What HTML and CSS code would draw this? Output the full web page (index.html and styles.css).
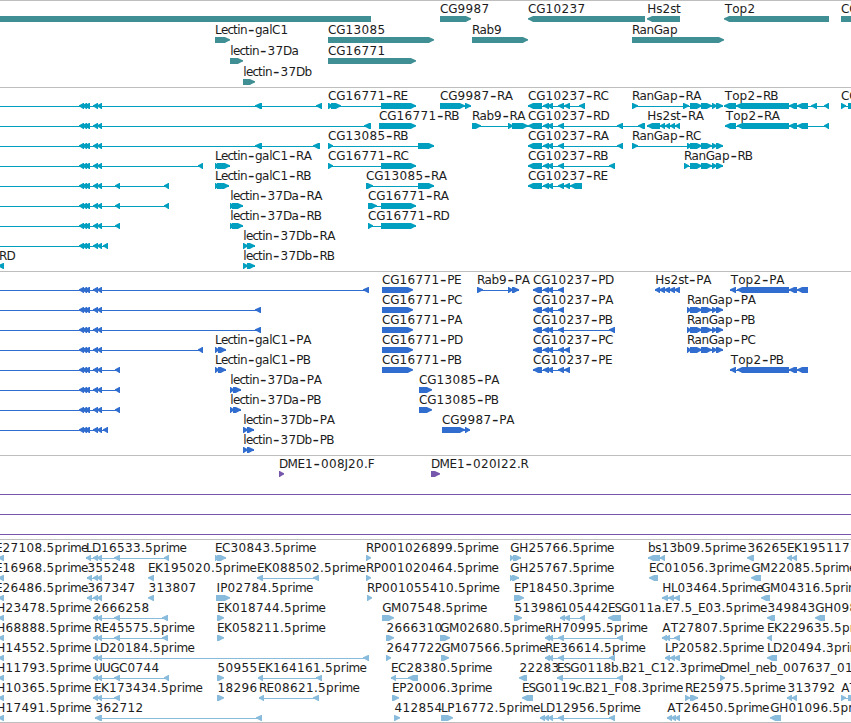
FILE: index.html
```html
<!DOCTYPE html>
<html lang="en">
<head>
<meta charset="utf-8">
<title>Genome browser</title>
<link rel="stylesheet" href="styles.css">
</head>
<body>
<main class="browser">
  <section class="track track-gene"><svg class="canvas" data-track="gene" data-pitch="21"></svg></section>
  <section class="track track-transcript"><svg class="canvas" data-track="transcript" data-pitch="20"></svg></section>
  <section class="track track-protein"><svg class="canvas" data-track="protein" data-pitch="20"></svg></section>
  <section class="track track-bac"><svg class="canvas" data-track="bac" data-pitch="20"></svg></section>
  <section class="track track-est"><svg class="canvas" data-track="est" data-pitch="20"></svg></section>
</main>
<script src="tracks.js"></script>
</body>
</html>
```
FILE: styles.css
```css
body {
  margin: 0;
  background: #fff;
}

.browser {
  display: flex;
  flex-direction: column;
  width: 851px;
  height: 723px;
  overflow: hidden;
}

.track {
  box-sizing: border-box;
  flex: none;
  border-top: 1px solid #bebebe;
}

.track-gene { height: 87px; color: #3f8f94; }
.track-transcript { height: 184px; color: #009fc0; }
.track-protein { height: 184px; color: #306dce; }
.track-bac { height: 84px; color: #7657ab; }
.track-est { height: 184px; color: #88bbdc; border-bottom: 1px solid #bebebe; }

.canvas {
  display: block;
  width: 100%;
  height: 100%;
  overflow: hidden;
}

.label {
  font: 12px "DejaVu Sans", sans-serif;
  fill: #1c1c1c;
  white-space: pre;
}

.hyphen { font-size: 18px; }

.shape { fill: currentColor; }
.intron { fill: currentColor; shape-rendering: crispEdges; }
```
FILE: tracks.js
```javascript
// Each line: row | strand | label | exon ranges. "$A", "$C" and so on are shared exon runs.
const runs = {
  $A: "-20--12 79-84 82-87 84-90 93-98 97-102",
  $C: "528-542 543-549 547-553",
  $P: "533-542 543-549 547-553 558-564",
  $R: "690-702 701-712 712-717 716-723",
  $S: "93-98 97-102"
};

const tracks = {
  gene: `
0|<||-20-371
0|>|CG9987|440-471
0|<|CG10237|528-645
0|<|Hs2st|647-680
0|<|Top2|724-829
0|>|CG|841-870
1|>|Lectin-galC1|215-230
1|>|CG13085|328-434
1|>|Rab9|472-528
1|>|RanGap|632-724
2|>|lectin-37Da|230-243
2|>|CG16771|328-416
3|>|lectin-37Db|243-255`,
  transcript: `
0|<||$A 255-262 316-322
0|>|CG16771-RE|328-333 331-341 381-416
0|>|CG9987-RA|440-465 465-471
0|<|CG10237-RC|$C 558-564 564-570 579-585
0|>|RanGap-RA|632-638 683-689 $R
0|<|Top2-RB|724-736 736-789 789-797 797-808 811-817 824-829
0|>|CG|841-846 848-870
1|<||$A 364-371
1|>|CG16771-RB|379-416
1|>|Rab9-RA|472-481 508-513 512-528
1|<|CG10237-RD|$C 558-564 617-623 638-645
1|<|Hs2st-RA|647-660 660-665 665-670 670-675 675-680
1|<|Top2-RA|725-736 737-789 789-797 797-808 824-829
2|<||$A 255-262 313-320
2|>|CG13085-RB|328-333 418-434
2|<|CG10237-RA|$C 558-564 617-623
2|>|RanGap-RC|632-638 687-692 $R
3|<||$A 198-203
3|>|Lectin-galC1-RA|215-219 217-230
3|>|CG16771-RC|328-333 381-416
3|<|CG10237-RB|$C 558-564 609-615
3|>|RanGap-RB|684-689 $R
4|<||$A 115-120 164-169
4|>|Lectin-galC1-RB|215-219 217-229
4|>|CG13085-RA|366-373 418-434
4|<|CG10237-RE|$C 558-564 564-570 570-582
5|<||$A 115-120 164-169
5|>|lectin-37Da-RA|230-234 232-243
5|>|CG16771-RA|368-377 381-416
6|<||$A 115-120
6|>|lectin-37Da-RB|230-234 232-243
6|>|CG16771-RD|368-373 381-416
7|<||$A 103-108
7|>|lectin-37Db-RA|243-248 247-255
8|<|RD@-1|-2-4
8|>|lectin-37Db-RB|243-248 247-255`,
  protein: `
0|<||$A 363-369
0|>|CG16771-PE|382-413
0|>|Rab9-PA|477-483 508-513 512-519
0|<|CG10237-PD|$P
0|<|Hs2st-PA|655-660 659-665 664-670 669-675 674-680
0|<|Top2-PA|730-736 737-789 789-797 797-808
1|<||$A 255-261
1|>|CG16771-PC|382-413
1|<|CG10237-PA|$P
1|>|RanGap-PA|687-691 $R
2|<||$A 255-261
2|>|CG16771-PA|382-413
2|<|CG10237-PB|$P 609-615
2|>|RanGap-PB|687-691 $R
3|<||$A 198-203
3|>|Lectin-galC1-PA|215-219 218-226
3|>|CG16771-PD|382-413
3|<|CG10237-PC|$P 564-570
3|>|RanGap-PC|687-691 $R
4|<||$A 115-120
4|>|Lectin-galC1-PB|215-219 218-226
4|>|CG16771-PB|382-413
4|<|CG10237-PE|$P 564-570
4|<|Top2-PB|730-736 737-789 789-797 797-808
5|<||$A 115-120
5|>|lectin-37Da-PA|230-234 233-241
5|>|CG13085-PA|419-432
6|<||$A 115-120
6|>|lectin-37Da-PB|230-234 233-241
6|>|CG13085-PB|419-432
7|<||$A 103-108
7|>|lectin-37Db-PA|243-248 247-254
7|>|CG9987-PA|442-465 465-470
8|>|lectin-37Db-PB|243-248 247-254`,
  bac: `
0|>|DME1-008J20.F|279-284
0|>|DME1-020I22.R|431-440
1|>||-20--14 870-880
2|>||-20--14 870-880
3|>||-20--14 870-880`,
  est: `
0|<|E27108.5prime@-5|-2-4
0|<|LD16533.5prime|86-91 $S 114-120 164-169
0|>|EC30843.5prime|215-219 217-226
0|>|RP001026899.5prime|366-371
0|>|GH25766.5prime|510-514 513-521
0|<|bs13b09.5prime|648-660 660-665
0|<|36265|747-754
0|<|EK195117.5prime|787-792 792-797
1|<|E16968.5prime@-5|-2-4
1|<|355248|87-92 $S
1|<|EK195020.5prime|148-154
1|<|EK088502.5prime|257-263 313-319
1|>|RP001020464.5prime|366-371
1|>|GH25767.5prime|510-514 512-519
1|<|EC01056.3prime|649-658
1|<|GM22085.5prime|751-761
2|<|E26486.5prime@-5|-2-4
2|<|367347|87-92 $S
2|<|313807|148-154
2|>|IP02784.5prime|216-230
2|>|RP001055410.5prime|367-372
2|>|EP18450.3prime|514-524
2|<|HL03464.5prime|662-668 668-674 674-680
2|<|GM04316.5prime|761-770
3|<|H23478.5prime@-4|-2-4
3|<|2666258@93|$S 114-120 162-168
3|>|EK018744.5prime|217-224
3|>|GM07548.5prime|382-394
3|>|513986|514-522
3|<|105442|560-565 564-570 580-585
3|<|ESG011a.E7.5_E03.5prime|608-621
3|<|349843|767-775
3|<|GH09818.5prime|815-825
4|<|H68888.5prime@-4|-2-4
4|<|RE45575.5prime@94|$S 114-120 162-168
4|>|EK058211.5prime|217-224
4|>|2666310|386-394
4|>|GM02680.5prime|440-450
4|<|RH70995.5prime|545-550 548-553 558-564 617-623
4|<|AT27807.5prime|662-667 665-670 674-680
4|<|EK229635.5prime|767-772
5|<|H14552.5prime@-4|-2-4
5|<|LD20184.5prime@94|$S 363-369
5|>|2647722|386-391
5|>|GM07566.5prime|441-449
5|<|RE36614.5prime|545-550 548-553 558-564 609-615
5|<|LP20582.5prime|665-670 670-675 674-680
5|<|LD20494.3prime|767-777
6|<|H11793.5prime@-4|-2-4
6|<|UUGC0744@94|$S 114-120 164-169
6|>|50955|217-224
6|<|EK164161.5prime|258-263 316-322
6|<|EC28380.5prime|391-396 408-418
6|<|22283|519-527
6|<|ESG0118b.B21_C12.3prime|557-563 617-623
6|>|Dmel_neb_007637_01|720-725
7|<|H10365.5prime@-4|-2-4
7|<|EK173434.5prime@94|$S 114-120
7|>|18296|217-224
7|<|RE08621.5prime|259-264 313-319
7|>|EP20006.3prime|392-399
7|<|ESG0119c.B21_F08.3prime|522-533
7|>|RE25975.5prime|685-690 690-698
7|<|313792|787-792 792-797
7|>|AT|841-846 848-870
8|<|H17491.5prime@-4|-2-4
8|<|362712|95-102 256-262
8|>|412854|394-400
8|>|LP16772.5prime|441-453
8|<|LD12956.5prime|540-545 544-549 548-553 558-564 609-615
8|<|AT26450.5prime|667-672 671-676 675-680
8|<|GH01096.5prime|770-781`
};

// Pixel cell width per character; characters not listed (digits) take 8.
const cells = {
  A: 8, B: 7, C: 8, D: 8.5, E: 7, F: 7, G: 9, H: 9, I: 4, J: 3, K: 7.5, L: 6, M: 10,
  P: 7, R: 7.5, S: 6, T: 8, U: 8, a: 7, b: 7, c: 5, e: 7, g: 7, i: 3, l: 3, m: 11,
  n: 7, o: 7, p: 8, r: 5, s: 6, t: 4, "-": 8, ".": 4, _: 6
};

const NS = "http://www.w3.org/2000/svg";
const ruler = document.createElement("canvas").getContext("2d");

function add(parent, name, attrs) {
  const node = document.createElementNS(NS, name);
  for (const key in attrs) node.setAttribute(key, attrs[key]);
  parent.appendChild(node);
  return node;
}

function drawLabel(group, text, x, y) {
  let pen = x + 0.3;
  const xs = [];
  const ys = [];
  for (const ch of text) {
    const cell = cells[ch] || 8;
    ruler.font = `${ch === "-" ? 18 : 12}px "DejaVu Sans", sans-serif`;
    xs.push((pen + (cell - ruler.measureText(ch).width) / 2).toFixed(2));
    ys.push(ch === "-" ? y + 1 : y);
    pen += cell;
  }
  const label = add(group, "text", { class: "label", x: xs.join(" "), y: ys.join(" ") });
  text.split(/(-)/).forEach(part => {
    if (part === "-") add(label, "tspan", { class: "hyphen" }).textContent = part;
    else label.appendChild(document.createTextNode(part));
  });
}

function exonPath(a, b, top, strand) {
  const head = Math.min(6, b - a);
  const tip = strand === "<" ? a : b;
  const back = strand === "<" ? b : a;
  const dir = strand === "<" ? 1 : -1;
  const shoulder = tip + dir * head * 0.85;
  const cheek = tip + dir * head * 0.4;
  return `M${tip} ${top + 2.2}L${cheek} ${top + 1.2}L${shoulder} ${top}H${back}V${top + 6}` +
    `H${shoulder}L${cheek} ${top + 4.6}L${tip} ${top + 3.6}Z`;
}

document.querySelectorAll(".canvas").forEach(svg => {
  const pitch = Number(svg.dataset.pitch);
  tracks[svg.dataset.track].trim().split("\n").forEach(line => {
    const [row, strand, name, spec] = line.split("|");
    const exons = spec.replace(/\$\w/g, key => runs[key]).split(" ").map(part => {
      const m = part.match(/^(-?\d+)-(-?\d+)$/);
      return [Number(m[1]), Number(m[2])];
    });
    const y = Number(row) * pitch - 1;
    const start = exons[0][0];
    const end = exons[exons.length - 1][1];
    const group = add(svg, "g", {});
    if (exons.length > 1) {
      add(group, "rect", { class: "intron", x: start, y: y + 19, width: end - start, height: 1 });
    }
    exons.forEach(([a, b]) => {
      add(group, "path", { class: "shape", d: exonPath(a, b, y + 16, strand) });
    });
    if (name) {
      const [text, at] = name.split("@");
      drawLabel(group, text, at === undefined ? start : Number(at), y + 13);
    }
  });
});
```
